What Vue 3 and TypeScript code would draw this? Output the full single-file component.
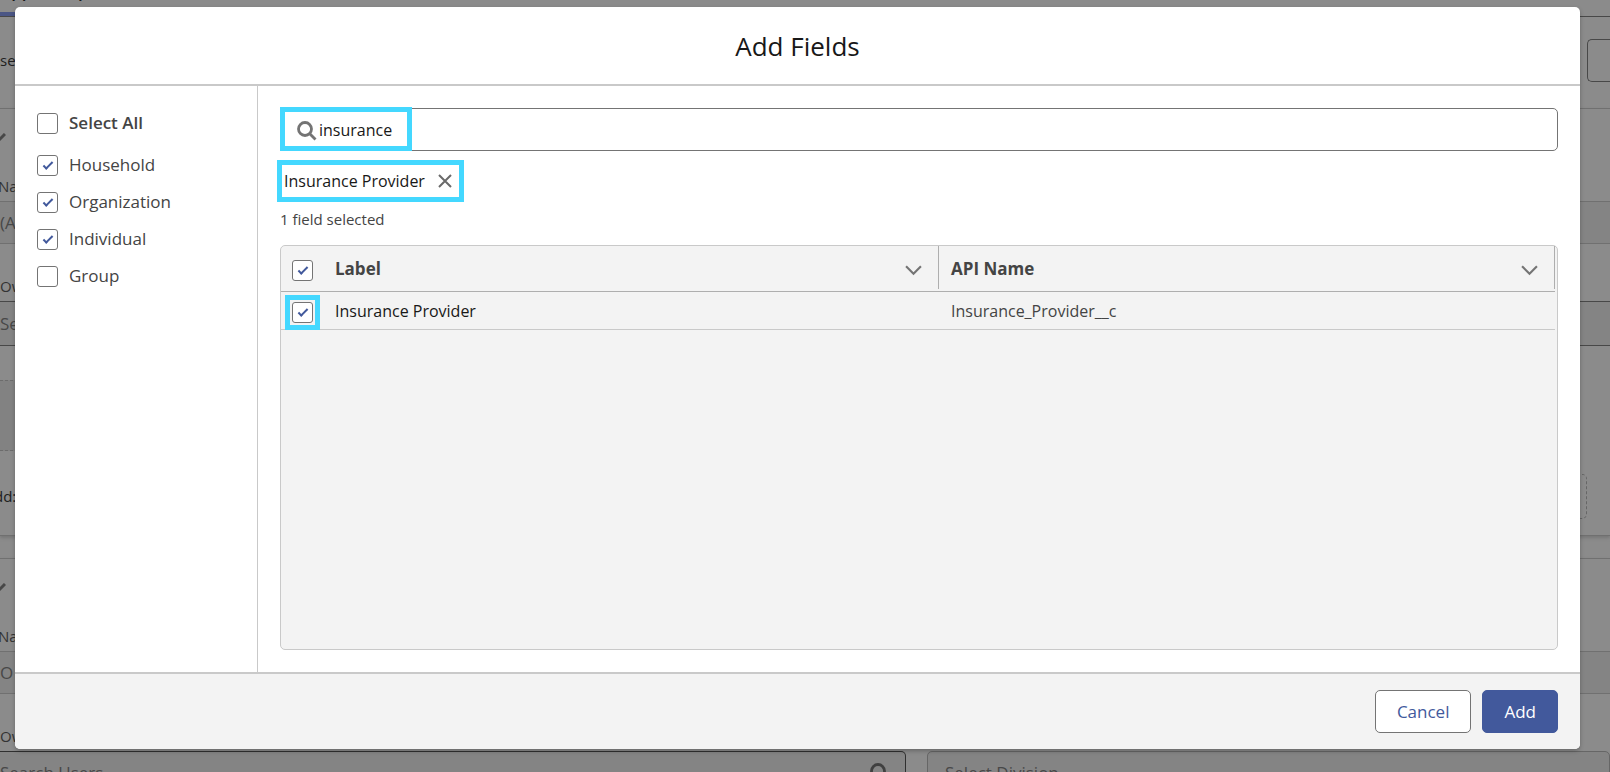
<script setup lang="ts">
import { ref } from 'vue'

interface Option {
  id: string
  label: string
  checked: boolean
}

const query = ref('insurance')
const selectAll = ref(false)
const groups = ref<Option[]>([
  { id: 'household', label: 'Household', checked: true },
  { id: 'organization', label: 'Organization', checked: true },
  { id: 'individual', label: 'Individual', checked: true },
  { id: 'group', label: 'Group', checked: false },
])
const allRows = ref(true)
const rows = ref([
  { label: 'Insurance Provider', api: 'Insurance_Provider__c', checked: true },
])
</script>

<template>
  <div class="screen">
    <div class="page" aria-hidden="true">
      <div class="tabs"><span class="tab">App Set up</span></div>
      <div class="toolbar"><span>se</span><span class="tool"></span></div>
      <section class="card">
        <div class="card-head">
          <svg class="tick" viewBox="0 0 14 10"><path d="M1 1 L6 8 L13 1" /></svg>
        </div>
        <div class="caption">Na</div>
        <div class="band">(A</div>
        <div class="caption tall">Ow</div>
        <div class="band entry">Se</div>
        <div class="drop"></div>
        <div class="adder"><span class="add-label">dd:</span><span class="slot"></span></div>
      </section>
      <section class="card second">
        <div class="card-head">
          <svg class="tick" viewBox="0 0 14 10"><path d="M1 1 L6 8 L13 1" /></svg>
        </div>
        <div class="caption">Na</div>
        <div class="band">O</div>
        <div class="caption tall">Ow</div>
        <div class="pair">
          <div class="box dark">
            <span>Search Users</span>
            <svg class="loupe" viewBox="0 0 20 20"><circle cx="8" cy="8" r="6.5" /><path d="M13 13 L18.5 18.5" /></svg>
          </div>
          <div class="box">Select Division</div>
        </div>
      </section>
    </div>

    <div class="backdrop">
      <div class="modal" role="dialog" aria-modal="true" aria-labelledby="title">
        <header class="head"><h1 id="title">Add Fields</h1></header>
        <div class="body">
          <aside class="side">
            <label class="opt all"><input v-model="selectAll" type="checkbox" class="check" />Select All</label>
            <label v-for="g in groups" :key="g.id" class="opt">
              <input v-model="g.checked" type="checkbox" class="check" />{{ g.label }}
            </label>
          </aside>
          <main class="main">
            <div class="search">
              <svg class="loupe" viewBox="0 0 20 20"><circle cx="8" cy="8" r="6.5" /><path d="M13 13 L18.5 18.5" /></svg>
              <input v-model="query" type="text" aria-label="Search fields" />
              <span class="mark mark-search"></span>
            </div>
            <div class="pill">
              <span>Insurance Provider</span>
              <button type="button" class="remove" aria-label="Remove Insurance Provider">
                <svg viewBox="0 0 14 14"><path d="M1 1 L13 13 M13 1 L1 13" /></svg>
              </button>
            </div>
            <p class="count">1 field selected</p>
            <div class="grid">
              <table>
                <thead>
                  <tr>
                    <th class="pick"><input v-model="allRows" type="checkbox" class="check" aria-label="Select all rows" /></th>
                    <th class="name">
                      <div class="th"><span>Label</span><svg class="chev" viewBox="0 0 16 10"><path d="M1 1 L8 8 L15 1" /></svg></div>
                    </th>
                    <th>
                      <div class="th"><span>API Name</span><svg class="chev" viewBox="0 0 16 10"><path d="M1 1 L8 8 L15 1" /></svg></div>
                    </th>
                  </tr>
                </thead>
                <tbody>
                  <tr v-for="r in rows" :key="r.api">
                    <td class="pick">
                      <span class="marked"><input v-model="r.checked" type="checkbox" class="check" :aria-label="r.label" /></span>
                    </td>
                    <td class="label">{{ r.label }}</td>
                    <td class="code">{{ r.api }}</td>
                  </tr>
                </tbody>
              </table>
            </div>
          </main>
        </div>
        <footer class="foot">
          <button type="button" class="btn">Cancel</button>
          <button type="button" class="btn primary">Add</button>
        </footer>
      </div>
    </div>
  </div>
</template>

<style>
body {
  margin: 0;
}
</style>

<style scoped>
* {
  box-sizing: border-box;
}
.screen {
  position: relative;
  height: 100vh;
  overflow: hidden;
  font-family: 'Segoe UI', 'Open Sans', 'Noto Sans', sans-serif;
  font-size: 17px;
  line-height: 24px;
  color: #444;
}

/* page under the dialog */
.page {
  height: 100%;
  overflow: hidden;
  background: #8b8b8b;
  color: #484848;
}
.tabs {
  display: flex;
  align-items: flex-end;
  height: 17px;
  border-bottom: 1px solid #484848;
}
.tab {
  width: 128px;
  height: 33px;
  border-bottom: 4px solid #4b5685;
  white-space: nowrap;
  line-height: 16px;
  font-weight: 600;
  color: #181818;
}
.toolbar {
  display: flex;
  justify-content: space-between;
  height: 91px;
  padding-top: 22px;
  font-size: 15px;
  line-height: 43px;
  color: #202020;
}
.tool {
  width: 23px;
  height: 43px;
  border: 1px solid #484848;
  border-right: 0;
  border-radius: 5px 0 0 5px;
}
.card {
  height: 428px;
  border-top: 1px solid #707070;
  border-bottom: 1px solid #707070;
  box-shadow: 0 2px 3px #777;
}
.second {
  margin-top: 22px;
}
.card-head {
  height: 65px;
  padding-top: 24px;
}
.tick {
  display: block;
  width: 14px;
  height: 10px;
  margin-left: -8px;
  fill: none;
  stroke: #484848;
  stroke-width: 3;
}
.caption {
  height: 27px;
  margin-left: -2px;
  font-size: 15px;
  color: #333;
}
.caption.tall {
  height: 57px;
  padding-top: 30px;
  margin-left: 0;
}
.band {
  height: 43px;
  border-top: 1px solid #707070;
  border-bottom: 1px solid #707070;
  background: #848484;
  line-height: 41px;
}
.entry {
  height: 45px;
  border-color: #484848;
  line-height: 44px;
}
.drop {
  width: 50%;
  height: 71px;
  margin-top: 34px;
  border-top: 1px dashed #6c6c6c;
  border-bottom: 1px dashed #6c6c6c;
  background: #828282;
}
.adder {
  display: flex;
  justify-content: space-between;
  padding: 23px 23px 0 0;
  font-size: 15px;
  line-height: 45px;
  color: #202020;
}
.add-label {
  margin-left: -6px;
}
.slot {
  width: 60px;
  height: 45px;
  border: 1px dashed #666;
  border-radius: 5px;
}
.pair {
  display: grid;
  grid-template-columns: 906px 1fr;
  gap: 21px;
}
.box {
  display: flex;
  align-items: center;
  justify-content: space-between;
  height: 43px;
  padding: 0 17px;
  border: 1px solid #666;
  border-radius: 5px;
  background: #848484;
}
.box.dark {
  border-color: #303030;
  border-left: 0;
  border-radius: 0 5px 5px 0;
  padding: 0 15px 0 0;
}

/* dialog */
.backdrop {
  position: absolute;
  inset: 0;
  display: flex;
  padding: 7px 30px 23px 15px;
}
.modal {
  display: flex;
  flex-direction: column;
  flex: 1;
  overflow: hidden;
  border-radius: 5px;
  background: #fff;
  box-shadow: 0 2px 4px rgba(0, 0, 0, 0.25);
}
.head {
  padding: 22px 0 21px;
  border-bottom: 2px solid #c9c9c9;
  text-align: center;
}
h1 {
  margin: 0;
  font-size: 26px;
  line-height: 34px;
  font-weight: 400;
  color: #181818;
}
.body {
  display: flex;
  flex: 1;
}
.side {
  width: 243px;
  padding: 25px 22px;
  border-right: 1px solid #c9c9c9;
}
.opt {
  display: flex;
  align-items: center;
  gap: 11px;
  height: 24px;
  margin-bottom: 13px;
}
.opt.all {
  margin-bottom: 18px;
  font-weight: 600;
}
.check {
  display: block;
  flex: none;
  appearance: none;
  width: 21px;
  height: 21px;
  margin: 0;
  border: 1px solid #747474;
  border-radius: 3px;
  background: #fff;
}
.check:checked::before {
  content: '';
  display: block;
  width: 8px;
  height: 3px;
  margin: 6px 0 0 5px;
  border-left: 2px solid #42599c;
  border-bottom: 2px solid #42599c;
  transform: rotate(-45deg);
}
.main {
  display: flex;
  flex-direction: column;
  flex: 1;
  padding: 22px;
}
.search {
  position: relative;
  display: flex;
  align-items: center;
  height: 43px;
  padding-left: 16px;
  border: 1px solid #747474;
  border-radius: 5px;
}
.loupe {
  width: 20px;
  height: 20px;
  fill: none;
  stroke: #747474;
  stroke-width: 2.8;
}
.page .loupe {
  stroke: #404040;
}
.search .loupe {
  margin-top: 3px;
}
.search input {
  flex: 1;
  height: 41px;
  padding: 0 2px;
  border: 0;
  outline: 0;
  background: transparent;
  font: inherit;
  font-size: 16px;
  color: #181818;
}
.mark {
  position: absolute;
  border: 5px solid #44d8ff;
  pointer-events: none;
}
.mark-search {
  left: -1px;
  top: -2px;
  width: 132px;
  height: 44px;
}
.pill {
  display: flex;
  align-items: center;
  align-self: flex-start;
  gap: 13px;
  height: 42px;
  margin: 9px 0 0 -3px;
  padding: 0 7px 0 2px;
  border: 5px solid #44d8ff;
  font-size: 16px;
  color: #181818;
}
.remove {
  display: block;
  width: 14px;
  height: 14px;
  padding: 0;
  border: 0;
  background: none;
}
.remove svg {
  display: block;
  fill: none;
  stroke: #6a6a6a;
  stroke-width: 2;
}
.count {
  margin: 6px 0 15px;
  font-size: 15px;
  line-height: 22px;
}
.grid {
  flex: 1;
  padding-right: 2px;
  border: 1px solid #c9c9c9;
  border-radius: 5px;
  background: #f3f3f3;
}
table {
  width: 100%;
  border-collapse: separate;
  border-spacing: 0;
  table-layout: fixed;
}
th,
td {
  padding: 0;
  text-align: left;
}
th {
  height: 46px;
  border-bottom: 1px solid #aeaeae;
  vertical-align: top;
}
td {
  height: 38px;
  border-bottom: 1px solid #c9c9c9;
  font-size: 16px;
}
.pick {
  width: 42px;
}
th.pick {
  padding: 14px 0 0 11px;
}
td.pick {
  padding: 3px 0 0 4px;
  vertical-align: top;
}
.marked {
  display: grid;
  place-items: center;
  width: 35px;
  height: 35px;
  margin-bottom: -1px;
  border: 5px solid #44d8ff;
}
th.name {
  width: 616px;
}
.th {
  display: flex;
  align-items: center;
  justify-content: space-between;
  height: 43px;
  padding: 3px 16px 0 12px;
  border-right: 1px solid #aeaeae;
  font-weight: 700;
}
.chev {
  width: 17px;
  height: 11px;
  margin-top: 2px;
  fill: none;
  stroke: #747474;
  stroke-width: 2;
}
.label,
.code {
  padding-left: 12px;
}
.label {
  color: #181818;
}
.foot {
  display: flex;
  justify-content: flex-end;
  gap: 11px;
  padding: 16px 22px;
  border-top: 2px solid #c9c9c9;
  background: #f3f3f3;
}
.btn {
  height: 43px;
  padding: 0 21px;
  border: 1px solid #747474;
  border-radius: 5px;
  background: #fff;
  font: inherit;
  color: #42599c;
}
.primary {
  border-color: #42599c;
  background: #42599c;
  color: #fff;
}
</style>
